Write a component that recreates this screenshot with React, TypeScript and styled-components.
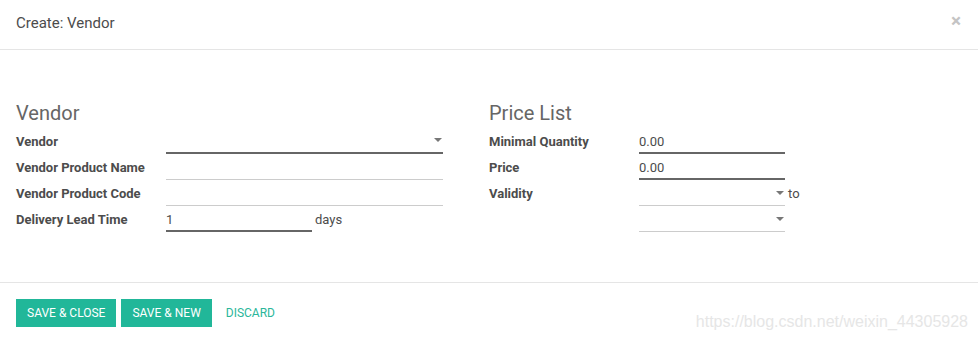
import styled, { createGlobalStyle } from "styled-components";

const GlobalStyle = createGlobalStyle`
  body {
    margin: 0;
    background: #ffffff;
    font-family: Roboto, "Liberation Sans", sans-serif;
    font-size: 13px;
    color: #4c4c4c;
  }
`;

const Modal = styled.div`
  width: 978px;
  height: 340px;
  background: #ffffff;
  position: relative;
  overflow: hidden;
`;

const Header = styled.div`
  display: flex;
  align-items: center;
  justify-content: space-between;
  height: 50px;
  padding: 0 16px;
  border-bottom: 1px solid #e5e5e5;
  box-sizing: border-box;
`;

const Title = styled.h4`
  margin: 0 0 4px;
  font-size: 15px;
  font-weight: 400;
  color: #4c4c4c;
`;

const Close = styled.span`
  font-size: 19px;
  font-weight: 700;
  color: #c4c4c4;
  line-height: 1;
  margin: 0 1px 8px 0;
`;

const Body = styled.div`
  display: grid;
  grid-template-columns: 473px 473px;
  padding: 50px 16px 50px;
`;

const Group = styled.div`
  display: flex;
  flex-direction: column;
`;

const GroupTitle = styled.div`
  font-size: 20px;
  line-height: 26px;
  height: 26px;
  margin-bottom: 2px;
  color: #666666;
`;

const Row = styled.div<{ $field: number }>`
  display: grid;
  grid-template-columns: 150px ${(p) => p.$field}px auto;
  grid-template-rows: 26px;
  height: 26px;
  align-items: stretch;
`;

const Label = styled.label`
  font-weight: 700;
  line-height: 28px;
  color: #4c4c4c;
`;

const Field = styled.div<{ $required?: boolean }>`
  display: flex;
  align-items: flex-start;
  justify-content: space-between;
  box-sizing: border-box;
  border-bottom: ${(p) => (p.$required ? "2px solid #666666" : "1px solid #cccccc")};
  line-height: 28px;
  color: #4c4c4c;
`;

const Caret = styled.span`
  align-self: center;
  width: 0;
  height: 0;
  margin-right: 1px;
  border-left: 4px solid transparent;
  border-right: 4px solid transparent;
  border-top: 4px solid #777777;
`;

const Suffix = styled.span`
  line-height: 28px;
  padding-left: 3px;
  color: #4c4c4c;
`;

const Footer = styled.div`
  display: flex;
  align-items: center;
  gap: 5px;
  padding: 16px;
  border-top: 1px solid #e5e5e5;
`;

const Button = styled.button<{ $primary?: boolean }>`
  height: 28px;
  padding: ${(p) => (p.$primary ? "0 11px" : "0 9px")};
  border: none;
  border-radius: 0;
  font-family: Roboto, "Liberation Sans", sans-serif;
  font-size: 12px;
  text-transform: uppercase;
  background: ${(p) => (p.$primary ? "#21b799" : "transparent")};
  color: ${(p) => (p.$primary ? "#ffffff" : "#2bb69a")};
`;

const Watermark = styled.span`
  position: absolute;
  right: 10px;
  bottom: 9px;
  font-family: "Liberation Sans", Arial, sans-serif;
  font-size: 16px;
  color: #e6e6e6;
`;

export default function App() {
  return (
    <>
      <GlobalStyle />
      <Modal>
        <Header>
          <Title>Create: Vendor</Title>
          <Close>×</Close>
        </Header>
        <Body>
          <Group>
            <GroupTitle>Vendor</GroupTitle>
            <Row $field={277}>
              <Label>Vendor</Label>
              <Field $required>
                <span />
                <Caret />
              </Field>
            </Row>
            <Row $field={277}>
              <Label>Vendor Product Name</Label>
              <Field />
            </Row>
            <Row $field={277}>
              <Label>Vendor Product Code</Label>
              <Field />
            </Row>
            <Row $field={146}>
              <Label>Delivery Lead Time</Label>
              <Field $required>1</Field>
              <Suffix>days</Suffix>
            </Row>
          </Group>
          <Group>
            <GroupTitle>Price List</GroupTitle>
            <Row $field={146}>
              <Label>Minimal Quantity</Label>
              <Field $required>0.00</Field>
            </Row>
            <Row $field={146}>
              <Label>Price</Label>
              <Field $required>0.00</Field>
            </Row>
            <Row $field={146}>
              <Label>Validity</Label>
              <Field>
                <span />
                <Caret />
              </Field>
              <Suffix>to</Suffix>
            </Row>
            <Row $field={146}>
              <span />
              <Field>
                <span />
                <Caret />
              </Field>
            </Row>
          </Group>
        </Body>
        <Footer>
          <Button $primary>Save &amp; Close</Button>
          <Button $primary>Save &amp; New</Button>
          <Button>Discard</Button>
        </Footer>
        <Watermark>https://blog.csdn.net/weixin_44305928</Watermark>
      </Modal>
    </>
  );
}
